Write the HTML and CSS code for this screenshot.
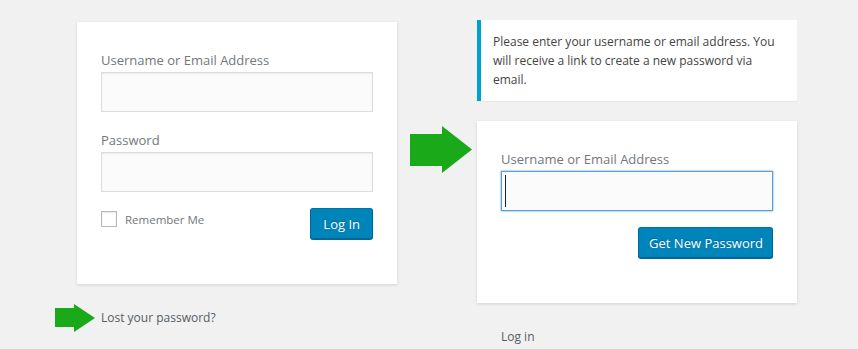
FILE: index.html
```html
<!DOCTYPE html>
<html lang="en">
<head>
    <meta charset="UTF-8">
    <title>Log In / Lost Password</title>
    <link rel="stylesheet" href="styles.css">
</head>
<body>
    <div class="page">

        <!-- login form -->
        <section class="column">
            <form class="login-card">
                <label class="field-label" for="user-login">Username or Email Address</label>
                <input class="field-input" type="text" id="user-login">

                <label class="field-label" for="user-pass">Password</label>
                <input class="field-input" type="password" id="user-pass">

                <div class="form-actions">
                    <label class="remember">
                        <input class="remember-box" type="checkbox">
                        <span>Remember Me</span>
                    </label>
                    <button class="button-primary" type="button">Log In</button>
                </div>
            </form>

            <p class="nav">
                <svg class="arrow-small" viewBox="0 0 40 28" width="40" height="28">
                    <polygon points="0,4 19,4 19,0 40,14 19,28 19,23 0,23" fill="#19a919"/>
                </svg>
                <a href="#">Lost your password?</a>
            </p>
            <p class="nav nav-back"><a href="#">&larr; Back to Site</a></p>
        </section>

        <!-- стрелка между экранами -->
        <div class="arrow-col">
            <svg class="arrow-big" viewBox="0 0 62 47" width="62" height="47">
                <polygon points="0,8 32,8 32,0 62,23.5 32,47 32,40 0,40" fill="#19a919"/>
            </svg>
        </div>

        <!-- lost password form -->
        <section class="column">
            <div class="notice">
                Please enter your username or email address. You will receive a link to create a new password via email.
            </div>

            <form class="login-card">
                <label class="field-label" for="lost-login">Username or Email Address</label>
                <div class="input-wrap">
                    <input class="field-input is-focused" type="text" id="lost-login">
                    <span class="caret"></span>
                </div>

                <div class="form-actions form-actions-end">
                    <button class="button-primary button-wide" type="button">Get New Password</button>
                </div>
            </form>

            <p class="nav"><a href="#">Log in</a></p>
        </section>

    </div>
</body>
</html>
```

FILE: styles.css
```css
/* базовые сбросы */
* {
    margin: 0;
    padding: 0;
    box-sizing: border-box;
}

body {
    background: #f1f1f1;
    font-family: 'Open Sans', 'Noto Sans', sans-serif;
    color: #444;
    overflow: hidden;
}

/* три колонки: форма, стрелка, форма */
.page {
    display: flex;
    align-items: flex-start;
    padding: 20px 0 0 77px;
}

.column {
    width: 320px;
    display: flex;
    flex-direction: column;
}

.arrow-col {
    width: 80px;
    padding: 106px 0 0 13px;
}

.arrow-big {
    display: block;
}

/* карточка формы */
.login-card {
    display: flex;
    flex-direction: column;
    background: #fff;
    padding: 26px 24px 45px;
    box-shadow: 0 1px 3px rgba(0, 0, 0, 0.13);
}

.column:first-child .login-card {
    margin-top: 2px;
}

.field-label {
    font-size: 13px;
    line-height: 24px;
    color: #72777c;
}

.field-input {
    display: block;
    width: 100%;
    height: 40px;
    margin: 0 0 16px;
    padding: 3px 5px;
    font-size: 24px;
    background: #fbfbfb;
    border: 1px solid #ddd;
    box-shadow: inset 0 1px 2px rgba(0, 0, 0, 0.07);
    outline: none;
}

.is-focused {
    border-color: #5b9dd9;
    box-shadow: 0 0 2px rgba(30, 140, 190, 0.8);
}

.input-wrap {
    position: relative;
}

.caret {
    position: absolute;
    left: 4px;
    top: 4px;
    width: 1px;
    height: 32px;
    background: #222;
}

.form-actions {
    display: flex;
    justify-content: space-between;
    align-items: flex-start;
}

.form-actions-end {
    justify-content: flex-end;
}

.remember {
    display: flex;
    align-items: center;
    gap: 8px;
    margin-top: 3px;
    font-size: 11.5px;
    color: #72777c;
}

.remember-box {
    appearance: none;
    width: 16px;
    height: 16px;
    background: #fff;
    border: 1px solid #b4b9be;
    box-shadow: inset 0 1px 2px rgba(0, 0, 0, 0.1);
}

/* синие кнопки */
.button-primary {
    height: 31px;
    padding: 0 12px;
    font-family: inherit;
    font-size: 13px;
    color: #fff;
    background: #0085ba;
    border: 1px solid #0073aa;
    border-color: #0073aa #006799 #006799;
    border-radius: 3px;
    box-shadow: 0 1px 0 #006799;
    text-shadow: 0 -1px 1px #006799;
    cursor: pointer;
}

.button-wide {
    padding: 0 9px 0 10px;
}

/* уведомление */
.notice {
    margin-bottom: 20px;
    padding: 12px;
    background: #fff;
    border-left: 4px solid #00a0d2;
    box-shadow: 0 1px 1px rgba(0, 0, 0, 0.04);
    font-size: 12px;
    line-height: 19px;
}

/* ссылки под формой */
.nav {
    display: flex;
    align-items: center;
    gap: 6px;
    padding: 0 24px;
    margin-top: 24px;
    font-size: 12px;
    line-height: 20px;
}

.nav a {
    color: #555d66;
    text-decoration: none;
}

.nav-back {
    margin-top: 18px;
}

.arrow-small {
    display: block;
    margin: -4px 0 -4px -46px;
}
```
